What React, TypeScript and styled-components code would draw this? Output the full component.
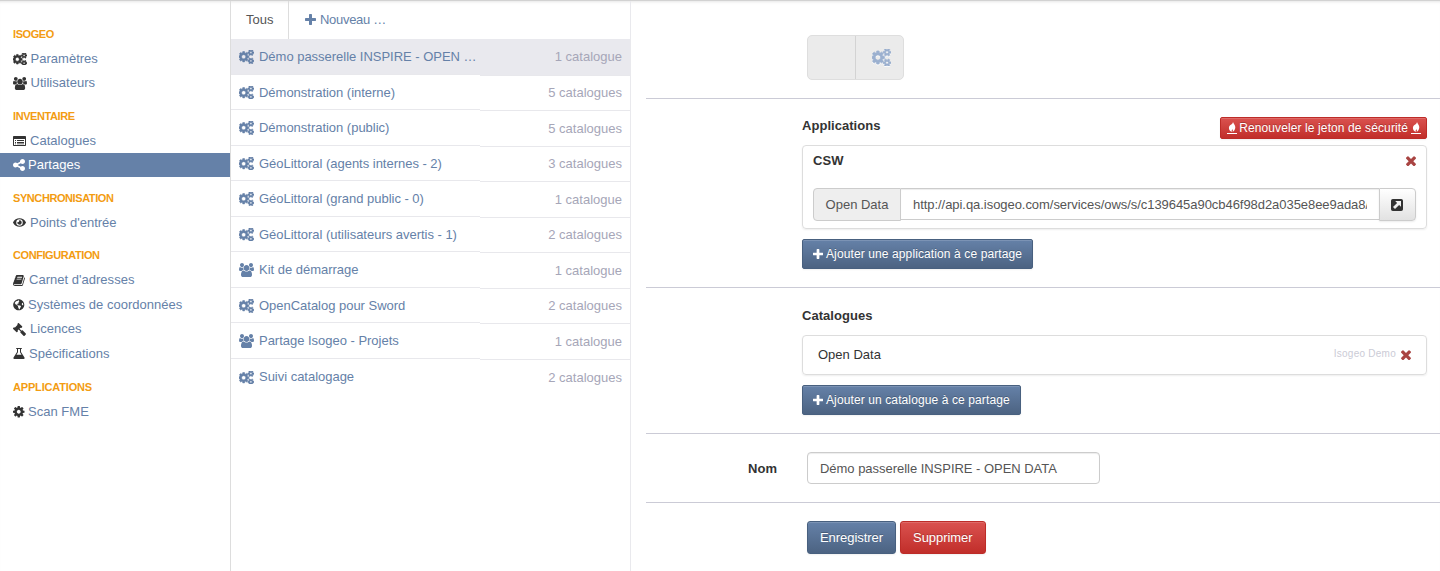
import React from "react";
import styled, { createGlobalStyle, css } from "styled-components";
import { FaEye, FaGlobeAmericas, FaGavel } from "react-icons/fa";

const GlobalStyle = createGlobalStyle`
  * { box-sizing: border-box; }
  body {
    margin: 0;
    background: #fff;
    color: #333;
    font: 13px/20px "Liberation Sans", Arial, sans-serif;
    overflow: hidden;
  }
  svg { display: block; flex: none; fill: currentColor; }
`;

/* ---------- icons ---------- */

type IconProps = { size?: number };

const Plus = ({ size = 13 }: IconProps) => (
  <svg width={size} height={size} viewBox="192 128 1408 1408">
    <path d="M1600 736v192q0 40-28 68t-68 28h-416v416q0 40-28 68t-68 28h-192q-40 0-68-28t-28-68v-416h-416q-40 0-68-28t-28-68v-192q0-40 28-68t68-28h416v-416q0-40 28-68t68-28h192q40 0 68 28t28 68v416h416q40 0 68 28t28 68z" />
  </svg>
);

const Times = ({ size = 10 }: IconProps) => (
  <svg width={size} height={size} viewBox="302 344 1188 1188">
    <path d="M1490 1322q0 40-28 68l-136 136q-28 28-68 28t-68-28l-294-294-294 294q-28 28-68 28t-68-28l-136-136q-28-28-28-68t28-68l294-294-294-294q-28-28-28-68t28-68l136-136q28-28 68-28t68 28l294 294 294-294q28-28 68-28t68 28l136 136q28 28 28 68t-28 68l-294 294 294 294q28 28 28 68z" />
  </svg>
);

const Share = () => (
  <svg width={12} height={12} viewBox="128 128 1536 1536">
    <path d="M1344 1024q133 0 226.5 93.5t93.5 226.5-93.5 226.5-226.5 93.5-226.5-93.5-93.5-226.5q0-12 2-34l-360-180q-92 86-218 86-133 0-226.5-93.5t-93.5-226.5 93.5-226.5 226.5-93.5q126 0 218 86l360-180q-2-22-2-34 0-133 93.5-226.5t226.5-93.5 226.5 93.5 93.5 226.5-93.5 226.5-226.5 93.5q-126 0-218-86l-360 180q2 22 2 34t-2 34l360 180q92-86 218-86z" />
  </svg>
);

const Cog = () => (
  <svg width={11.5} height={11.5} viewBox="128 128 1536 1536">
    <path d="M1152 896q0-106-75-181t-181-75-181 75-75 181 75 181 181 75 181-75 75-181zm512-109v222q0 12-8 23t-20 13l-185 28q-19 54-39 91 35 50 107 138 10 12 10 25t-9 23q-27 37-99 108t-94 71q-12 0-26-9l-138-108q-44 23-91 38-16 136-29 186-7 28-36 28h-222q-14 0-24.5-8.5t-11.5-21.5l-28-184q-49-16-90-37l-141 107q-10 9-25 9-14 0-25-11-126-114-165-168-7-10-7-23 0-12 8-23 15-21 51-66.5t54-70.5q-27-50-41-99l-183-27q-13-2-21-12.5t-8-23.5v-222q0-12 8-23t19-13l186-28q14-46 39-92-40-57-107-138-10-12-10-24 0-10 9-23 26-36 98.5-107.5t94.5-71.5q13 0 26 10l138 107q44-23 91-38 16-136 29-186 7-28 36-28h222q14 0 24.5 8.5t11.5 21.5l28 184q49 16 90 37l142-107q9-9 24-9 13 0 25 10 129 119 165 170 7 8 7 22 0 12-8 23-15 21-51 66.5t-54 70.5q26 50 41 98l183 28q13 2 21 12.5t8 23.5z" />
  </svg>
);

const Cogs = ({ size = 14 }: IconProps) => (
  <svg
    width={size}
    height={(size * 1664) / 1856}
    viewBox="0 64 1856 1664"
    stroke="currentColor"
    strokeWidth={70}
  >
    <path d="M832 896q0-106-75-181t-181-75-181 75-75 181 75 181 181 75 181-75 75-181zm768 512q0-52-38-90t-90-38-90 38-38 90q0 53 37.500 90.500t90.500 37.500 90.500-37.500 37.500-90.500zm0-1024q0-52-38-90t-90-38-90 38-38 90q0 53 37.500 90.500t90.500 37.500 90.500-37.500 37.500-90.500zm-384 421v185q0 10-7 19.500t-16 10.500l-155 24q-11 35-32 76 34 48 90 115 7 11 7 20 0 12-7 19-23 30-82.500 89.500t-78.500 59.500q-11 0-21-7l-115-90q-37 19-77 31-11 108-23 155-7 24-30 24h-186q-11 0-20-7.500t-10-17.500l-23-153q-34-10-75-31l-118 89q-7 7-20 7-11 0-21-8-144-133-144-160 0-9 7-19 10-14 41-53t47-61q-23-44-35-82l-152-24q-10-1-17-9.500t-7-19.500v-185q0-10 7-19.500t16-10.500l155-24q11-35 32-76-34-48-90-115-7-11-7-20 0-12 7-20 22-30 82-89t79-59q11 0 21 7l115 90q34-18 77-32 11-108 23-154 7-24 30-24h186q11 0 20 7.500t10 17.500l23 153q34 10 75 31l118-89q8-7 20-7 11 0 21 8 144 133 144 160 0 8-7 19-12 16-42 54t-45 60q23 48 34 82l152 23q10 2 17 10.500t7 19.500zm640 533v140q0 16-149 31-12 27-30 52 51 113 51 138 0 4-4 7-122 71-124 71-8 0-46-47t-52-68q-20 2-30 2t-30-2q-14 21-52 68t-46 47q-2 0-124-71-4-3-4-7 0-25 51-138-18-25-30-52-149-15-149-31v-140q0-16 149-31 13-29 30-52-51-113-51-138 0-4 4-7 4-2 35-20t59-34 30-16q8 0 46 46.500t52 67.500q20-2 30-2t30 2q51-71 92-112l6-2q4 0 124 70 4 3 4 7 0 25-51 138 17 23 30 52 149 15 149 31zm0-1024v140q0 16-149 31-12 27-30 52 51 113 51 138 0 4-4 7-122 71-124 71-8 0-46-47t-52-68q-20 2-30 2t-30-2q-14 21-52 68t-46 47q-2 0-124-71-4-3-4-7 0-25 51-138-18-25-30-52-149-15-149-31v-140q0-16 149-31 13-29 30-52-51-113-51-138 0-4 4-7 4-2 35-20t59-34 30-16q8 0 46 46.500t52 67.500q20-2 30-2t30 2q51-71 92-112l6-2q4 0 124 70 4 3 4 7 0 25-51 138 17 23 30 52 149 15 149 31z" />
  </svg>
);

const Users = ({ size = 14 }: IconProps) => (
  <svg width={size} height={(size * 1792) / 1920} viewBox="64 0 1920 1792">
    <path d="M657 896q-162 5-265 128h-134q-82 0-138-40.500t-56-118.500q0-353 124-353 6 0 43.500 21t97.500 42.500 119 21.500q67 0 133-23-5 37-5 66 0 139 81 256zm1071 637q0 120-73 189.500t-194 69.500h-874q-121 0-194-69.500t-73-189.500q0-53 3.500-103.500t14-109 26.500-108.500 43-97.500 62-81 85.500-53.500 111.500-20q10 0 43 21.500t73 48 107 48 135 21.500 135-21.500 107-48 73-48 43-21.500q61 0 111.500 20t85.500 53.500 62 81 43 97.500 26.500 108.500 14 109 3.500 103.500zm-1024-1277q0 106-75 181t-181 75-181-75-75-181 75-181 181-75 181 75 75 181zm704 384q0 159-112.500 271.500t-271.500 112.500-271.500-112.500-112.500-271.500 112.500-271.500 271.500-112.500 271.500 112.500 112.500 271.500zm576 225q0 78-56 118.500t-138 40.500h-134q-103-123-265-128 81-117 81-256 0-29-5-66 66 23 133 23 59 0 119-21.500t97.500-42.500 43.500-21q124 0 124 353zm-128-609q0 106-75 181t-181 75-181-75-75-181 75-181 181-75 181 75 75 181z" />
  </svg>
);

const Book = () => (
  <svg width={12} height={11} viewBox="0 128 1664 1536">
    <path d="M1639 478q40 57 18 129l-275 906q-19 64-76.500 107.500t-122.500 43.500h-923q-77 0-148.500-53.500t-99.500-131.500q-24-67-2-127 0-4 3-27t4-37q1-8-3-21.500t-3-19.500q2-11 8-21t16.500-23.500 16.500-23.500q23-38 45-91.500t30-91.500q3-10 .5-30t-.5-28q3-11 17-28t17-23q21-36 42-92t25-90q1-9-2.500-32t.5-28q4-13 22-30.500t22-22.500q19-26 42.500-84.500t27.500-96.500q1-8-3-25.500t-2-26.500q2-8 9-18t18-23 17-21q8-12 16.500-30.500t15-35 16-36 19.500-32 26.500-23.500 36-11.500 47.500 5.500l-1 3q38-9 51-9h761q74 0 114 56t18 130l-274 906q-36 119-71.500 153.500t-128.500 34.500h-869q-27 0-38 15-11 16-1 43 24 70 144 70h923q29 0 56-15.500t35-41.500l300-987q7-22 5-57 38 15 59 43zm-1064 2q-4 13 2 22.500t20 9.500h608q13 0 25.500-9.500t16.500-22.500l21-64q4-13-2-22.500t-20-9.500h-608q-13 0-25.500 9.500t-16.500 22.500zm-83 256q-4 13 2 22.500t20 9.500h608q13 0 25.500-9.500t16.500-22.500l21-64q4-13-2-22.500t-20-9.500h-608q-13 0-25.500 9.500t-16.500 22.500z" />
  </svg>
);

const Flask = () => (
  <svg width={12} height={11} viewBox="0 0 12 11">
    <path
      fillRule="evenodd"
      d="M3.200 0h5.600v1H8v3l3.500 5.500Q12 11 10.600 11H1.400Q0 11 .5 9.500L4 4V1h-.8zM5 1v3.300L3.500 6.800h5L7 4.300V1z"
    />
  </svg>
);

const Gavel = styled(FaGavel)`
  transform: scaleX(-1);
`;

const ListCard = () => (
  <svg width={13} height={10} viewBox="0 0 13 10">
    <path
      fillRule="evenodd"
      d="M.8 0h11.400q.8 0 .8.8v8.400q0 .8-.8.8H.8Q0 10 0 9.200V.8Q0 0 .8 0zM1 3v6h11V3zM2 4h1v1H2zM4 4h7v1H4zM2 6h1v1H2zM4 6h7v1H4zM2 7.500h1v.8H2zM4 7.500h7v.8H4z"
    />
  </svg>
);

const Flame = () => (
  <svg width={10} height={12} viewBox="0 0 10 12">
    <path d="M6 0c.5 1.700 2.300 2.900 2.300 5.300 0 2.300-1.300 3.900-2.800 4.600.6-1 .5-1.900-.1-2.700-.5.700-.9 1.300-.6 2.700C3.200 9.200 1.900 8 1.900 6c0-1.800 1.200-2.700 2.400-3.400C5.200 2 5.800 1.200 6 0z" />
    <path d="M0 11h10v1H0z" />
  </svg>
);

const ExternalSquare = () => (
  <svg width={12} height={12} viewBox="0 0 12 12">
    <path
      fillRule="evenodd"
      d="M1.800 0h8.400Q12 0 12 1.800v8.400q0 1.800-1.800 1.800H1.800Q0 12 0 10.200V1.800Q0 0 1.800 0zM4.200 2l1.900 1.900L2 8l2 2 4.100-4.100L10 7.800V2z"
    />
  </svg>
);

/* ---------- frame ---------- */

const Page = styled.div`
  display: flex;
  width: 1440px;
  height: 571px;
  border-top: 1px solid #d2d2d2;
  box-shadow: inset 0 3px 3px -2px rgba(0, 0, 0, 0.1);
  overflow: hidden;
`;

/* ---------- side menu ---------- */

const Sidebar = styled.nav`
  width: 231px;
  flex: none;
  border-right: 1px solid #ddd;
  padding-top: 20.900px;
`;

const MenuGroup = styled.section`
  margin-bottom: 8.550px;
  &:last-child {
    padding-top: 0.500px;
  }
`;

const MenuTitle = styled.h2<{ $tracking?: number }>`
  margin: 0;
  padding-left: 13px;
  height: 24.450px;
  font-size: 11px;
  line-height: 24px;
  font-weight: bold;
  letter-spacing: ${(p) => p.$tracking ?? -0.42}px;
  color: #f39c12;
`;

const MenuItem = styled.a<{ $active?: boolean; $gap?: number }>`
  display: flex;
  align-items: center;
  gap: ${(p) => p.$gap ?? 3.5}px;
  height: 24.500px;
  padding: 0.500px 0 0 13px;
  color: #333;
  span {
    color: #6581a8;
    letter-spacing: 0.02px;
  }
  ${(p) =>
    p.$active &&
    css`
      background: #6581a8;
      color: #fff;
      span {
        color: #fff;
      }
    `}
`;

/* ---------- share list ---------- */

const ListPane = styled.section`
  width: 400px;
  flex: none;
  border-right: 1px solid #e9e9ed;
`;

const Tabs = styled.div`
  display: flex;
  height: 38px;
  line-height: 36px;
`;

const Tab = styled.a<{ $current?: boolean }>`
  display: flex;
  align-items: center;
  gap: 4px;
  padding: 0 15px;
  color: ${(p) => (p.$current ? "#555" : "#6581a8")};
  ${(p) => p.$current && "border-right: 1px solid #ddd; width: 58px;"}
  ${(p) => !p.$current && "padding: 0 0 1px 16px; letter-spacing: -0.3px;"}
`;

const Columns = styled.div`
  display: flex;
`;

const NameColumn = styled.div`
  width: 249px;
`;

const CountColumn = styled.div`
  flex: 1;
`;

const cell = css<{ $selected?: boolean }>`
  display: flex;
  align-items: center;
  height: 35.560px;
  border-bottom: 1px solid #e8e8ec;
  background: ${(p) => (p.$selected ? "#e9e9ee" : "transparent")};
  &:last-child {
    border-bottom: 0;
  }
`;

const NameCell = styled.a<{ $selected?: boolean }>`
  ${cell}
  gap: 5px;
  padding: 1.400px 0 0 8px;
  color: #6581a8;
  letter-spacing: -0.02px;
  white-space: nowrap;
`;

const CountCell = styled.div<{ $selected?: boolean }>`
  ${cell}
  justify-content: flex-end;
  padding: 0.600px 8px 0 0;
  color: #a6a6b8;
  &:first-child {
    height: 36.560px;
    padding-top: 0;
  }
`;

/* ---------- detail form ---------- */

const Detail = styled.main`
  flex: 1;
  min-width: 0;
  padding-left: 15px;
`;

const Block = styled.section<{ $h: number; $top: number; $left?: number }>`
  height: ${(p) => p.$h}px;
  padding: ${(p) => p.$top}px 13px 0 ${(p) => p.$left ?? 156}px;
  border-bottom: 1px solid #cbcbd6;
  &:last-child {
    border-bottom: 0;
  }
`;

const Switch = styled.div`
  display: flex;
  width: 97px;
  height: 45px;
  border: 1px solid #dedede;
  border-radius: 5px;
  background: #ebebeb;
  overflow: hidden;
`;

const SwitchHalf = styled.div`
  display: flex;
  align-items: center;
  justify-content: center;
  flex: 1;
  padding-left: 4px;
  color: #9bb0cf;
  svg {
    filter: drop-shadow(0 1px 0 rgba(255, 255, 255, 0.8));
  }
  &:first-child {
    flex: none;
    width: 48px;
    border-right: 1px solid #d3d3d3;
  }
`;

const Heading = styled.div<{ $h: number }>`
  display: flex;
  justify-content: space-between;
  align-items: flex-start;
  height: ${(p) => p.$h}px;
`;

const Title = styled.h3`
  margin: 0;
  font-size: 13px;
  line-height: 18px;
  letter-spacing: 0.04px;
`;

const Button = styled.button<{ $danger?: boolean; $size?: "mini" | "small" }>`
  display: flex;
  align-items: center;
  justify-content: center;
  gap: ${(p) => (p.$size === "mini" ? 2.5 : 3)}px;
  height: ${(p) => (p.$size === "mini" ? 22 : p.$size === "small" ? 30 : 33)}px;
  padding: 0 ${(p) => (p.$size === "mini" ? 5.5 : p.$size === "small" ? 10 : 12)}px;
  border: 1px solid ${(p) => (p.$danger ? "#bd2c28" : "#48607f")};
  border-radius: ${(p) => (p.$size ? 2 : 3)}px;
  background: ${(p) =>
    p.$danger
      ? "linear-gradient(#da524f, #c12e2a)"
      : "linear-gradient(#6581a8, #4c6382)"};
  box-shadow: inset 0 1px 0 rgba(255, 255, 255, 0.15), 0 1px 2px rgba(0, 0, 0, 0.06);
  color: #fff;
  font: ${(p) => (p.$size ? 12 : 13)}px "Liberation Sans", Arial, sans-serif;
  letter-spacing: ${(p) => (p.$size ? 0.11 : -0.05)}px;
  text-shadow: 0 -1px 0 rgba(0, 0, 0, 0.22);
  white-space: nowrap;
`;

const Card = styled.div`
  margin: 6px 0 10px;
  border: 1px solid #ddd;
  border-radius: 4px;
  box-shadow: 0 1px 2px rgba(0, 0, 0, 0.07);
`;

const AppCard = styled(Card)`
  height: 84px;
  padding: 5px 10px;
`;

const CardHead = styled.div`
  display: flex;
  justify-content: space-between;
  align-items: center;
  height: 20px;
  margin-bottom: 17px;
`;

const CatalogCard = styled(Card)`
  display: flex;
  align-items: center;
  height: 40px;
  padding: 0 15px;
`;

const Owner = styled.span`
  font-size: 10px;
  color: #cbcbd6;
  margin: -2px 5px 0 auto;
  letter-spacing: 0.25px;
`;

const Remove = styled.span`
  display: flex;
  color: #a94442;
`;

const InputGroup = styled.div`
  display: flex;
  height: 33px;
`;

const Addon = styled.span`
  width: 88px;
  flex: none;
  height: 33px;
  line-height: 31px;
  text-align: center;
  border: 1px solid #ccc;
  border-radius: 4px 0 0 4px;
  background: #eee;
  color: #555;
`;

const Input = styled.div`
  height: 32px;
  padding: 0 12px;
  line-height: 31px;
  border: 1px solid #ccc;
  border-radius: 4px;
  box-shadow: inset 0 1px 1px rgba(0, 0, 0, 0.075);
  color: #555;
  white-space: nowrap;
  overflow: hidden;
`;

const UrlInput = styled(Input)`
  flex: 1;
  min-width: 0;
  border-width: 1px 0;
  border-radius: 0;
  letter-spacing: -0.05px;
  span {
    display: block;
    overflow: hidden;
  }
`;

const OpenButton = styled.span`
  display: flex;
  align-items: center;
  justify-content: center;
  flex: none;
  width: 37px;
  height: 33px;
  border: 1px solid #ccc;
  border-radius: 0 4px 4px 0;
  background: linear-gradient(#fff, #e2e2e2);
  box-shadow: 0 1px 2px rgba(0, 0, 0, 0.08);
  padding-right: 1px;
`;

const FieldRow = styled.div`
  display: flex;
  align-items: center;
  gap: 30px;
`;

const FieldLabel = styled.label`
  width: 131px;
  padding-top: 1px;
  text-align: right;
  font-weight: bold;
`;

const NameInput = styled(Input)`
  width: 293px;
  letter-spacing: -0.03px;
`;

const Actions = styled.div`
  display: flex;
  gap: 4px;
`;

const menu = [
  {
    title: "ISOGEO",
    items: [
      { icon: <Cogs />, label: "Paramètres" },
      { icon: <Users />, label: "Utilisateurs" },
    ],
  },
  {
    title: "INVENTAIRE",
    items: [
      { icon: <ListCard />, label: "Catalogues", gap: 4 },
      { icon: <Share />, label: "Partages", active: true, gap: 3 },
    ],
  },
  {
    title: "SYNCHRONISATION",
    items: [{ icon: <FaEye size={13} />, label: "Points d'entrée", gap: 4 }],
  },
  {
    title: "CONFIGURATION",
    items: [
      { icon: <Book />, label: "Carnet d'adresses", gap: 4 },
      { icon: <FaGlobeAmericas size={11.5} />, label: "Systèmes de coordonnées" },
      { icon: <Gavel size={13} />, label: "Licences", gap: 4 },
      { icon: <Flask />, label: "Spécifications", gap: 4 },
    ],
  },
  {
    title: "APPLICATIONS",
    tracking: -0.17,
    items: [{ icon: <Cog />, label: "Scan FME" }],
  },
] as {
  title: string;
  tracking?: number;
  items: { icon: React.ReactNode; label: string; active?: boolean; gap?: number }[];
}[];

const shares = [
  { name: "Démo passerelle INSPIRE - OPEN …", count: "1 catalogue" },
  { name: "Démonstration (interne)", count: "5 catalogues" },
  { name: "Démonstration (public)", count: "5 catalogues" },
  { name: "GéoLittoral (agents internes - 2)", count: "3 catalogues" },
  { name: "GéoLittoral (grand public - 0)", count: "1 catalogue" },
  { name: "GéoLittoral (utilisateurs avertis - 1)", count: "2 catalogues" },
  { name: "Kit de démarrage", count: "1 catalogue", group: true },
  { name: "OpenCatalog pour Sword", count: "2 catalogues" },
  { name: "Partage Isogeo - Projets", count: "1 catalogue", group: true },
  { name: "Suivi catalogage", count: "2 catalogues" },
];

export default function App() {
  return (
    <>
      <GlobalStyle />
      <Page>
        <Sidebar>
          {menu.map((group) => (
            <MenuGroup key={group.title}>
              <MenuTitle $tracking={group.tracking}>{group.title}</MenuTitle>
              {group.items.map((item) => (
                <MenuItem key={item.label} $active={item.active} $gap={item.gap}>
                  {item.icon}
                  <span>{item.label}</span>
                </MenuItem>
              ))}
            </MenuGroup>
          ))}
        </Sidebar>

        <ListPane>
          <Tabs>
            <Tab $current>Tous</Tab>
            <Tab>
              <Plus size={11} />
              Nouveau …
            </Tab>
          </Tabs>
          <Columns>
            <NameColumn>
              {shares.map((s, i) => (
                <NameCell key={s.name} $selected={i === 0}>
                  {s.group ? <Users size={15} /> : <Cogs size={15} />}
                  {s.name}
                </NameCell>
              ))}
            </NameColumn>
            <CountColumn>
              {shares.map((s, i) => (
                <CountCell key={s.name} $selected={i === 0}>
                  {s.count}
                </CountCell>
              ))}
            </CountColumn>
          </Columns>
        </ListPane>

        <Detail>
          <Block $h={98} $top={34} $left={161}>
            <Switch>
              <SwitchHalf />
              <SwitchHalf>
                <Cogs size={19} />
              </SwitchHalf>
            </Switch>
          </Block>

          <Block $h={189} $top={18}>
            <Heading $h={22}>
              <Title>Applications</Title>
              <Button $danger $size="mini">
                <Flame />
                Renouveler le jeton de sécurité
                <Flame />
              </Button>
            </Heading>
            <AppCard>
              <CardHead>
                <Title>CSW</Title>
                <Remove>
                  <Times />
                </Remove>
              </CardHead>
              <InputGroup>
                <Addon>Open Data</Addon>
                <UrlInput>
                  <span>http://api.qa.isogeo.com/services/ows/s/c139645a90cb46f98d2a035e8ee9ada8/</span>
                </UrlInput>
                <OpenButton>
                  <ExternalSquare />
                </OpenButton>
              </InputGroup>
            </AppCard>
            <Actions>
              <Button $size="small">
                <Plus size={10} />
                Ajouter une application à ce partage
              </Button>
            </Actions>
          </Block>

          <Block $h={146} $top={19}>
            <Heading $h={22}>
              <Title>Catalogues</Title>
            </Heading>
            <CatalogCard>
              Open Data
              <Owner>Isogeo Demo</Owner>
              <Remove>
                <Times />
              </Remove>
            </CatalogCard>
            <Actions>
              <Button $size="small">
                <Plus size={10} />
                Ajouter un catalogue à ce partage
              </Button>
            </Actions>
          </Block>

          <Block $h={69} $top={18} $left={0}>
            <FieldRow>
              <FieldLabel>Nom</FieldLabel>
              <NameInput>Démo passerelle INSPIRE - OPEN DATA</NameInput>
            </FieldRow>
          </Block>

          <Block $h={68} $top={18} $left={161}>
            <Actions>
              <Button>Enregistrer</Button>
              <Button $danger>Supprimer</Button>
            </Actions>
          </Block>
        </Detail>
      </Page>
    </>
  );
}
